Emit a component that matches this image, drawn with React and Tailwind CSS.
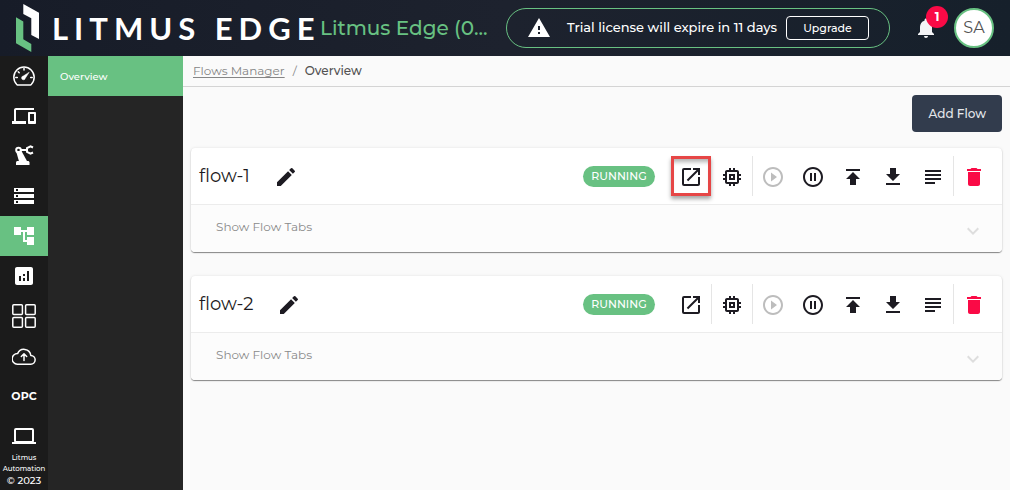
import { useState } from "react";
import {
  MdAccountTree,
  MdAnalytics,
  MdDelete,
  MdDevices,
  MdEdit,
  MdExpandMore,
  MdFileDownload,
  MdMemory,
  MdNotifications,
  MdOpenInNew,
  MdPauseCircleOutline,
  MdPlayCircleOutline,
  MdPublish,
  MdStorage,
  MdSubject,
  MdWarning,
} from "react-icons/md";

const flows = [
  { name: "flow-1", status: "RUNNING", highlight: true },
  { name: "flow-2", status: "RUNNING", highlight: false },
];

function LogoMark() {
  return (
    <svg viewBox="0 0 24 48" className="w-6 h-12 shrink-0" aria-hidden="true">
      <path d="M7.300 0L23 8.800V35l-7.700-4V14.300l-8-4.300z" fill="#fff" />
      <path d="M0 13.300l7.300 4.300v17.700l8 4.700v8L0 39.300z" fill="#68c182" />
    </svg>
  );
}

function GaugeIcon() {
  return (
    <svg viewBox="0 0 24 24" className="size-6" fill="none" stroke="currentColor" strokeWidth="1.500" strokeLinecap="round">
      <path d="M4.600 20.300A10.200 10.200 0 1 1 19.400 20.300c-.6.500-1 .7-1.800.7H6.400c-.8 0-1.200-.2-1.800-.7z" />
      <path d="M12 4.500v1.500M3.800 13.500h1.500M18.700 13.500h1.500M6.200 7.700l1 1" />
      <path d="M17 8.500l-3.700 5.700a1.900 1.900 0 1 1-2.200-2.200z" fill="currentColor" strokeWidth="0.500" />
    </svg>
  );
}

function RobotArmIcon() {
  return (
    <svg viewBox="0 0 24 24" className="size-6" fill="none" stroke="currentColor" strokeWidth="2">
      <path d="M4 7l3.200 11H15.500L9.500 7z" fill="currentColor" stroke="none" />
      <path d="M4 18.500c0-.8.700-1.500 1.500-1.500H16c.8 0 1.500.7 1.500 1.500V21H4z" fill="currentColor" stroke="none" />
      <circle cx="6.500" cy="6" r="2.300" />
      <path d="M8.500 6h6M21 3.500l-2.500-1.200L15 4.200v3.600l3.500 1.900L21 8.500" />
    </svg>
  );
}

function GridIcon() {
  return (
    <svg viewBox="0 0 24 24" className="size-6" fill="none" stroke="currentColor" strokeWidth="1.500">
      <rect x="0.800" y="0.800" width="9.600" height="9.600" rx="1" />
      <rect x="13.600" y="0.800" width="9.600" height="9.600" rx="1" />
      <rect x="0.800" y="13.600" width="9.600" height="9.600" rx="1" />
      <rect x="13.600" y="13.600" width="9.600" height="9.600" rx="1" />
    </svg>
  );
}

function CloudIcon() {
  return (
    <svg viewBox="0 0 24 24" className="size-6" fill="none" stroke="currentColor" strokeWidth="1.500" strokeLinecap="round" strokeLinejoin="round">
      <path d="M5.300 20.200h13.400a4.400 4.400 0 0 0 .1-8.800A6.900 6.900 0 0 0 5.600 9.600a5.300 5.300 0 0 0-.3 10.600z" />
      <path d="M12 16.500v-6M9.300 12.500L12 9.800l2.700 2.700" />
    </svg>
  );
}

function LaptopIcon() {
  return (
    <svg viewBox="0 0 24 24" className="size-6" fill="none" stroke="currentColor" strokeWidth="2">
      <rect x="3" y="5" width="18" height="13" rx="1" />
      <path d="M0 19h24" />
    </svg>
  );
}

const navItems = [
  { label: "Dashboard", icon: <GaugeIcon /> },
  { label: "Devices", icon: <MdDevices className="size-6" /> },
  { label: "Digital Twins", icon: <RobotArmIcon /> },
  { label: "DataHub", icon: <MdStorage className="size-6" /> },
  { label: "Flows Manager", icon: <MdAccountTree className="size-6" />, active: true },
  { label: "Analytics", icon: <MdAnalytics className="size-6" /> },
  { label: "Applications", icon: <GridIcon /> },
  { label: "Integration", icon: <CloudIcon /> },
  { label: "OPC", icon: <span className="text-[11px] font-bold">OPC</span> },
  { label: "System", icon: <LaptopIcon /> },
];

function Header() {
  return (
    <header className="flex h-14 items-center bg-linear-to-r from-[#171c28] via-[#1d222e] to-[#16202b] px-4 text-white">
      <LogoMark />
      <span className="ml-3 w-[264px] shrink-0 font-['Lato'] text-[31px] leading-10 font-bold tracking-[6px] whitespace-nowrap">
        LITMUS EDGE
      </span>
      <span className="ml-1 shrink-0 text-[20px] leading-7 font-medium whitespace-nowrap text-[#68c182]">
        Litmus Edge (0...
      </span>
      <div className="ml-auto flex h-10 w-96 shrink-0 items-center rounded-full border border-[#68c182] px-5">
        <MdWarning className="size-6 shrink-0" />
        <span className="ml-4 text-[13px] font-medium whitespace-nowrap">Trial license will expire in 11 days</span>
        <button type="button" className="ml-auto h-6 w-[83px] rounded border border-white text-[11px] font-medium">
          Upgrade
        </button>
      </div>
      <button type="button" className="relative ml-6 shrink-0" aria-label="Notifications">
        <MdNotifications className="size-6 text-gray-100" />
        <span className="absolute -top-2.5 left-3 flex size-[22px] items-center justify-center rounded-full bg-[#fa0a46] text-xs font-bold">
          1
        </span>
      </button>
      <button type="button" className="ml-4 size-10 shrink-0 rounded-full border-2 border-[#68c182] bg-white text-base text-neutral-600">
        SA
      </button>
    </header>
  );
}

function SideNav() {
  return (
    <nav className="w-12 shrink-0 bg-[#1b1b1b] text-white">
      {navItems.map((item) => (
        <a
          key={item.label}
          href="#"
          aria-label={item.label}
          className={`flex h-10 items-center justify-center ${item.active ? "bg-[#68c182]" : ""}`}
        >
          {item.icon}
        </a>
      ))}
      <div className="-mt-1 text-center font-medium">
        <p className="text-[7px] leading-[11px]">
          Litmus
          <br />
          Automation
        </p>
        <p className="text-[10px] leading-[14px]">© 2023</p>
      </div>
    </nav>
  );
}

function IconButton({ label, disabled, className = "", children }) {
  return (
    <button
      type="button"
      aria-label={label}
      disabled={disabled}
      className={`flex size-10 items-center justify-center pt-0.5 ${disabled ? "text-[#bdbdbd]" : ""} ${className}`}
    >
      {children}
    </button>
  );
}

function Divider({ hidden }) {
  return <span className={`h-10 w-px ${hidden ? "" : "bg-neutral-200"}`} />;
}

function FlowCard({ flow }) {
  const [open, setOpen] = useState(false);

  return (
    <section className="rounded bg-white shadow-[0_1px_1px_rgba(0,0,0,0.45),0_0_3px_rgba(0,0,0,0.1)]">
      <div className="flex h-14 items-center px-2 text-[#1d1b22]">
        <h2 className="text-lg">{flow.name}</h2>
        <IconButton label="Rename flow" className="ml-4">
          <MdEdit className="size-6" />
        </IconButton>
        <span className="mr-4 ml-auto flex h-[21px] w-[72px] items-center justify-center rounded-full bg-[#68c182] text-[11px] font-medium text-white">
          {flow.status}
        </span>
        <IconButton
          label="Open flow"
          className={flow.highlight ? "outline-3 -outline-offset-3 outline-[#e64646] shadow-[0_3px_4px_rgba(0,0,0,0.35),inset_0_6px_4px_rgba(0,0,0,0.3)]" : ""}
        >
          <MdOpenInNew className="size-6" />
        </IconButton>
        <Divider hidden={flow.highlight} />
        <IconButton label="Flow resources">
          <MdMemory className="size-6" />
        </IconButton>
        <Divider />
        <IconButton label="Start flow" disabled>
          <MdPlayCircleOutline className="size-6" />
        </IconButton>
        <IconButton label="Pause flow">
          <MdPauseCircleOutline className="size-6" />
        </IconButton>
        <IconButton label="Export flow">
          <MdPublish className="size-6" />
        </IconButton>
        <IconButton label="Import flow">
          <MdFileDownload className="size-6" />
        </IconButton>
        <IconButton label="Flow logs">
          <MdSubject className="size-6" />
        </IconButton>
        <Divider />
        <IconButton label="Delete flow" className="text-[#fa0a46]">
          <MdDelete className="size-6" />
        </IconButton>
      </div>
      <button
        type="button"
        onClick={() => setOpen(!open)}
        aria-expanded={open}
        className="flex h-12 w-full items-start justify-between rounded-b border-t border-[#ececec] bg-[#fcfcfc] pt-3.5 pr-[17px] pl-[25px] text-xs text-[#8a8a8a]"
      >
        Show Flow Tabs
        <MdExpandMore className="size-6 text-[#dedede]" />
      </button>
    </section>
  );
}

export default function App() {
  return (
    <div className="flex min-h-screen flex-col bg-[#fafafa] font-['Montserrat','Inter',sans-serif]">
      <Header />
      <div className="flex flex-1">
        <SideNav />
        <aside className="w-[135px] shrink-0 bg-[#252525]">
          <a href="#" className="flex h-10 items-center bg-[#68c182] px-3 text-[10px] font-medium text-white">
            Overview
          </a>
        </aside>
        <main className="min-w-0 flex-1">
          <nav className="flex h-[31px] items-center gap-2 border-b border-neutral-300 px-2.5 text-xs text-neutral-600">
            <a href="#" className="text-[#858585] underline underline-offset-2">
              Flows Manager
            </a>
            <span className="text-[#858585]">/</span>
            <span className="font-medium">Overview</span>
          </nav>
          <div className="flex flex-col gap-6 p-2">
            <button type="button" className="-mb-2 h-[37px] self-end rounded bg-[#323c4d] px-4 text-xs font-medium text-gray-200">
              Add Flow
            </button>
            {flows.map((flow) => (
              <FlowCard key={flow.name} flow={flow} />
            ))}
          </div>
        </main>
      </div>
    </div>
  );
}
